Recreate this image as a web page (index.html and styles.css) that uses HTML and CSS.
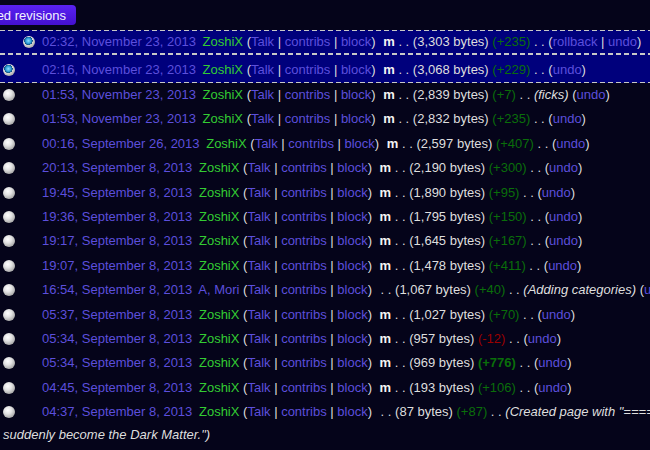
FILE: index.html
```html
<!DOCTYPE html>
<html lang="en">
<head>
<meta charset="utf-8">
<title>Revision history</title>
<link rel="stylesheet" href="styles.css">
</head>
<body>
<div class="toolbar">
  <div class="btnclip"><button class="cmp" type="button">Compare selected revisions</button></div>
</div>
<ul class="history">
  <li class="row selected first"><span class="radio off"></span><span class="radio on"></span><a class="date">02:32, November 23, 2013</a> <span class="user"><a class="uname">ZoshiX</a> <span class="tools">(<a>Talk</a> | <a>contribs</a> | <a>block</a>)</span></span> <b class="minor">m</b> . . <span class="size">(3,303 bytes)</span> <span class="pos">(+235)</span> . . <span class="undo">(<a>rollback</a> | <a>undo</a>)</span></li>
  <li class="row selected second"><span class="radio on"></span><span class="radio off"></span><a class="date">02:16, November 23, 2013</a> <span class="user"><a class="uname">ZoshiX</a> <span class="tools">(<a>Talk</a> | <a>contribs</a> | <a>block</a>)</span></span> <b class="minor">m</b> . . <span class="size">(3,068 bytes)</span> <span class="pos">(+229)</span> . . <span class="undo">(<a>undo</a>)</span></li>
  <li class="row"><span class="radio"></span><span class="radio off"></span><a class="date">01:53, November 23, 2013</a> <span class="user"><a class="uname">ZoshiX</a> <span class="tools">(<a>Talk</a> | <a>contribs</a> | <a>block</a>)</span></span> <b class="minor">m</b> . . <span class="size">(2,839 bytes)</span> <span class="pos">(+7)</span> . . <span class="comment">(ficks)</span> <span class="undo">(<a>undo</a>)</span></li>
  <li class="row"><span class="radio"></span><span class="radio off"></span><a class="date">01:53, November 23, 2013</a> <span class="user"><a class="uname">ZoshiX</a> <span class="tools">(<a>Talk</a> | <a>contribs</a> | <a>block</a>)</span></span> <b class="minor">m</b> . . <span class="size">(2,832 bytes)</span> <span class="pos">(+235)</span> . . <span class="undo">(<a>undo</a>)</span></li>
  <li class="row"><span class="radio"></span><span class="radio off"></span><a class="date">00:16, September 26, 2013</a> <span class="user"><a class="uname">ZoshiX</a> <span class="tools">(<a>Talk</a> | <a>contribs</a> | <a>block</a>)</span></span> <b class="minor">m</b> . . <span class="size">(2,597 bytes)</span> <span class="pos">(+407)</span> . . <span class="undo">(<a>undo</a>)</span></li>
  <li class="row"><span class="radio"></span><span class="radio off"></span><a class="date">20:13, September 8, 2013</a> <span class="user"><a class="uname">ZoshiX</a> <span class="tools">(<a>Talk</a> | <a>contribs</a> | <a>block</a>)</span></span> <b class="minor">m</b> . . <span class="size">(2,190 bytes)</span> <span class="pos">(+300)</span> . . <span class="undo">(<a>undo</a>)</span></li>
  <li class="row"><span class="radio"></span><span class="radio off"></span><a class="date">19:45, September 8, 2013</a> <span class="user"><a class="uname">ZoshiX</a> <span class="tools">(<a>Talk</a> | <a>contribs</a> | <a>block</a>)</span></span> <b class="minor">m</b> . . <span class="size">(1,890 bytes)</span> <span class="pos">(+95)</span> . . <span class="undo">(<a>undo</a>)</span></li>
  <li class="row"><span class="radio"></span><span class="radio off"></span><a class="date">19:36, September 8, 2013</a> <span class="user"><a class="uname">ZoshiX</a> <span class="tools">(<a>Talk</a> | <a>contribs</a> | <a>block</a>)</span></span> <b class="minor">m</b> . . <span class="size">(1,795 bytes)</span> <span class="pos">(+150)</span> . . <span class="undo">(<a>undo</a>)</span></li>
  <li class="row"><span class="radio"></span><span class="radio off"></span><a class="date">19:17, September 8, 2013</a> <span class="user"><a class="uname">ZoshiX</a> <span class="tools">(<a>Talk</a> | <a>contribs</a> | <a>block</a>)</span></span> <b class="minor">m</b> . . <span class="size">(1,645 bytes)</span> <span class="pos">(+167)</span> . . <span class="undo">(<a>undo</a>)</span></li>
  <li class="row"><span class="radio"></span><span class="radio off"></span><a class="date">19:07, September 8, 2013</a> <span class="user"><a class="uname">ZoshiX</a> <span class="tools">(<a>Talk</a> | <a>contribs</a> | <a>block</a>)</span></span> <b class="minor">m</b> . . <span class="size">(1,478 bytes)</span> <span class="pos">(+411)</span> . . <span class="undo">(<a>undo</a>)</span></li>
  <li class="row"><span class="radio"></span><span class="radio off"></span><a class="date">16:54, September 8, 2013</a> <span class="user"><a class="uname other">A, Mori</a> <span class="tools">(<a>Talk</a> | <a>contribs</a> | <a>block</a>)</span></span> <span class="dots">. .</span> <span class="size">(1,067 bytes)</span> <span class="pos">(+40)</span> . . <span class="comment">(Adding categories)</span> <span class="undo">(<a>undo</a>)</span></li>
  <li class="row"><span class="radio"></span><span class="radio off"></span><a class="date">05:37, September 8, 2013</a> <span class="user"><a class="uname">ZoshiX</a> <span class="tools">(<a>Talk</a> | <a>contribs</a> | <a>block</a>)</span></span> <b class="minor">m</b> . . <span class="size">(1,027 bytes)</span> <span class="pos">(+70)</span> . . <span class="undo">(<a>undo</a>)</span></li>
  <li class="row"><span class="radio"></span><span class="radio off"></span><a class="date">05:34, September 8, 2013</a> <span class="user"><a class="uname">ZoshiX</a> <span class="tools">(<a>Talk</a> | <a>contribs</a> | <a>block</a>)</span></span> <b class="minor">m</b> . . <span class="size">(957 bytes)</span> <span class="neg">(-12)</span> . . <span class="undo">(<a>undo</a>)</span></li>
  <li class="row"><span class="radio"></span><span class="radio off"></span><a class="date">05:34, September 8, 2013</a> <span class="user"><a class="uname">ZoshiX</a> <span class="tools">(<a>Talk</a> | <a>contribs</a> | <a>block</a>)</span></span> <b class="minor">m</b> . . <span class="size">(969 bytes)</span> <strong class="pos">(+776)</strong> . . <span class="undo">(<a>undo</a>)</span></li>
  <li class="row"><span class="radio"></span><span class="radio off"></span><a class="date">04:45, September 8, 2013</a> <span class="user"><a class="uname">ZoshiX</a> <span class="tools">(<a>Talk</a> | <a>contribs</a> | <a>block</a>)</span></span> <b class="minor">m</b> . . <span class="size">(193 bytes)</span> <span class="pos">(+106)</span> . . <span class="undo">(<a>undo</a>)</span></li>
  <li class="row"><span class="radio"></span><span class="radio off"></span><a class="date">04:37, September 8, 2013</a> <span class="user"><a class="uname">ZoshiX</a> <span class="tools">(<a>Talk</a> | <a>contribs</a> | <a>block</a>)</span></span> <span class="dots">. .</span> <span class="size">(87 bytes)</span> <span class="pos">(+87)</span> . . <span class="comment">(Created page with "====The Dark==== Everything will<br>suddenly become the Dark Matter.")</span></li>
</ul>
</body>
</html>
```
FILE: styles.css
```css
html {
  overflow: hidden;
  background: #05041a;
}

body {
  margin: 0;
  width: 720px;
  font-family: "Liberation Sans", Arial, sans-serif;
  font-size: 13px;
  color: #dedede;
}

.toolbar {
  padding-top: 5px;
  margin-bottom: 5px;
}

.btnclip {
  width: 76px;
  height: 20px;
  overflow: hidden;
  display: flex;
  justify-content: flex-end;
}

.cmp {
  flex: none;
  height: 20px;
  margin: 0;
  padding: 0 10px 0 4px;
  border: 0;
  border-radius: 0 4px 4px 0;
  background: linear-gradient(#5a22f2, #4410d0);
  color: #f2f2ff;
  font-family: "Liberation Sans", Arial, sans-serif;
  font-size: 13px;
  white-space: nowrap;
}

.history {
  list-style: none;
  margin: 0;
  padding: 0;
}

.row {
  border: 1px solid transparent;
  padding-left: 2px;
  line-height: 22.4px;
  white-space: nowrap;
}

.selected {
  background:
    repeating-linear-gradient(90deg, #c8c8c8 0 5px, transparent 5px 8px) left top / 100% 1px no-repeat border-box,
    repeating-linear-gradient(90deg, #c8c8c8 0 5px, transparent 5px 8px) left bottom / 100% 1px no-repeat border-box,
    #00007c;
}

.first {
  line-height: 22px;
}

.second {
  padding-top: 4px;
  padding-bottom: 1px;
  line-height: 22px;
}

.radio {
  display: inline-block;
  width: 12px;
  height: 12px;
  border-radius: 50%;
  vertical-align: -2px;
  box-sizing: border-box;
  background: radial-gradient(circle at 40% 35%, #ffffff 0, #e4e4e4 35%, #a8a8a8 75%, #6c6c6c 100%);
}

.radio + .radio {
  margin-left: 8px;
  margin-right: 7px;
}

.radio.off {
  visibility: hidden;
}

.radio.on {
  background:
    radial-gradient(circle at 45% 40%, #8fe0ff 0, #2a9ad6 28%, #0d4f80 42%, transparent 44%),
    radial-gradient(circle at 40% 35%, #ffffff 0, #e4e4e4 40%, #a8a8a8 75%, #6c6c6c 100%);
}

a {
  color: #5c4fdc;
  text-decoration: none;
}

.date {
  margin-right: 3px;
}

.uname {
  color: #33cc33;
}

.uname.other {
  color: #5c4fdc;
}

.minor {
  margin-left: 4px;
  color: #f4f4f4;
  font-weight: bold;
}

.dots {
  margin-left: 5px;
}

.pos {
  color: #0a6e0a;
}

strong.pos {
  font-weight: bold;
}

.neg {
  color: #9a0000;
}

.comment {
  font-style: italic;
  color: #dedede;
}
```
